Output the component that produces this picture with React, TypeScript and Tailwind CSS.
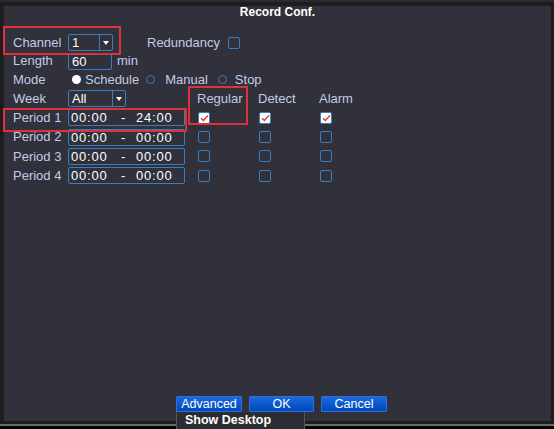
import React from 'react';

const font = { fontFamily: '"Liberation Sans", Arial, sans-serif' };

const Check = ({ checked = false }: { checked?: boolean }) => (
  <div
    className={`w-[12px] h-[12px] rounded-[2px] border-[1.5px] border-[#3a7fbd] flex items-center justify-center ${
      checked ? 'bg-white' : ''
    }`}
  >
    {checked && (
      <svg width="9" height="8" viewBox="0 0 9 8">
        <path d="M1 4.2 L3.4 6.4 L8 1.4" fill="none" stroke="#e0303a" strokeWidth="1.4" />
      </svg>
    )}
  </div>
);

const Select = ({ value, width }: { value: string; width: string }) => (
  <div className={`${width} h-[17px] border border-[#3a7fbd] rounded-[2px] flex items-center text-white`}>
    <span className="flex-1 pl-[3px] leading-none">{value}</span>
    <div className="w-[13px] h-full border-l border-[#3a7fbd] flex items-center justify-center">
      <svg width="6" height="4" viewBox="0 0 6 4">
        <path d="M0 0 H6 L3 4 Z" fill="#fff" />
      </svg>
    </div>
  </div>
);

const Radio = ({ on = false }: { on?: boolean }) => (
  <div
    className={`w-[9px] h-[9px] rounded-full ${on ? 'bg-white' : 'border-[1.5px] border-[#3a7fbd]'}`}
  />
);

const periods = [
  { label: 'Period 1', end: '24:00', checks: [true, true, true] },
  { label: 'Period 2', end: '00:00', checks: [false, false, false] },
  { label: 'Period 3', end: '00:00', checks: [false, false, false] },
  { label: 'Period 4', end: '00:00', checks: [false, false, false] },
];

export default function App() {
  return (
    <div className="w-[554px] h-[429px] bg-[#1d1d20] overflow-hidden relative text-[13px]" style={font}>
      <div className="h-[6px] border-t-[2px] border-[#2a2a2e]" />
      <div className="mx-[4px] w-[547px] h-[415px] bg-[#30313b] flex flex-col relative">
        <div className="h-[13px] text-center text-white font-bold text-[12px] leading-[12px]">
          Record Conf.
        </div>

        <div className="flex flex-col pl-[9px] mt-[14px] text-[#c2cce6]">
          {/* Channel */}
          <div className="h-[19px] flex items-center">
            <span className="w-[55px]">Channel</span>
            <Select value="1" width="w-[45px]" />
            <span className="ml-[34px]">Redundancy</span>
            <div className="ml-[8px]">
              <Check />
            </div>
          </div>
          {/* Length */}
          <div className="h-[18px] flex items-center">
            <span className="w-[55px]">Length</span>
            <div className="w-[44px] h-[17px] border border-[#3a7fbd] rounded-[2px] text-white pl-[3px] leading-[15px]">
              60
            </div>
            <span className="ml-[5px]">min</span>
          </div>
          {/* Mode */}
          <div className="h-[19px] flex items-center">
            <span className="w-[59px]">Mode</span>
            <Radio on />
            <span className="ml-[4px]">Schedule</span>
            <div className="ml-[7px]">
              <Radio />
            </div>
            <span className="ml-[10px]">Manual</span>
            <div className="ml-[10px]">
              <Radio />
            </div>
            <span className="ml-[8px]">Stop</span>
          </div>
          {/* Week */}
          <div className="h-[19px] flex items-center">
            <span className="w-[55px]">Week</span>
            <Select value="All" width="w-[58px]" />
            <span className="ml-[71px] w-[61px]">Regular</span>
            <span className="w-[61px]">Detect</span>
            <span>Alarm</span>
          </div>
          {/* Periods */}
          <div className="flex flex-col">
            {periods.map((p) => (
              <div key={p.label} className="h-[19.4px] flex items-center">
                <span className="w-[55px]">{p.label}</span>
                <div className="w-[117px] h-[17px] border border-[#3a7fbd] rounded-[2px] text-white flex items-center pl-[2px] leading-none">
                  <span className="w-[50px] tracking-[0.8px]">00:00</span>
                  <span className="w-[15px]">-</span>
                  <span className="tracking-[0.8px]">{p.end}</span>
                </div>
                <div className="ml-[13px] w-[61px]">
                  <Check checked={p.checks[0]} />
                </div>
                <div className="w-[61px]">
                  <Check checked={p.checks[1]} />
                </div>
                <div>
                  <Check checked={p.checks[2]} />
                </div>
              </div>
            ))}
          </div>
        </div>

        <div className="mt-auto mb-[9px] flex pl-[172px] gap-[7px] text-white text-[12.5px]">
          <button className="w-[66px] h-[16px] leading-[14px] border border-[#2f6fd6] bg-gradient-to-b from-[#1a6ae0] to-[#0049b8] rounded-[1px]">
            Advanced
          </button>
          <button className="w-[65px] h-[16px] leading-[14px] border border-[#2f6fd6] bg-gradient-to-b from-[#1a6ae0] to-[#0049b8] rounded-[1px]">
            OK
          </button>
          <button className="w-[66px] h-[16px] leading-[14px] border border-[#2f6fd6] bg-gradient-to-b from-[#1a6ae0] to-[#0049b8] rounded-[1px]">
            Cancel
          </button>
        </div>
      </div>
      <div className="h-[3px] bg-[#1d1d20]" />
      <div className="h-[2px] bg-[#6a6a6e]" />
      <div className="bg-black h-[10px]" />

      {/* highlight annotations */}
      <div className="absolute left-[3px] top-[26px] w-[118px] h-[29px] border-2 border-[#e0303a]" />
      <div className="absolute left-[188px] top-[86px] w-[60px] h-[39px] border-2 border-[#e0303a]" />
      <div className="absolute left-[3px] top-[108px] w-[184px] h-[24px] border-2 border-[#e0303a]" />

      {/* popup menu */}
      <div className="absolute left-[176px] top-[412px] w-[129px] h-[17px] bg-[#2b2c33] border-x border-[#55565c] text-white font-bold text-[12.5px] pl-[8px] leading-[17px]">
        Show Desktop
      </div>
    </div>
  );
}
